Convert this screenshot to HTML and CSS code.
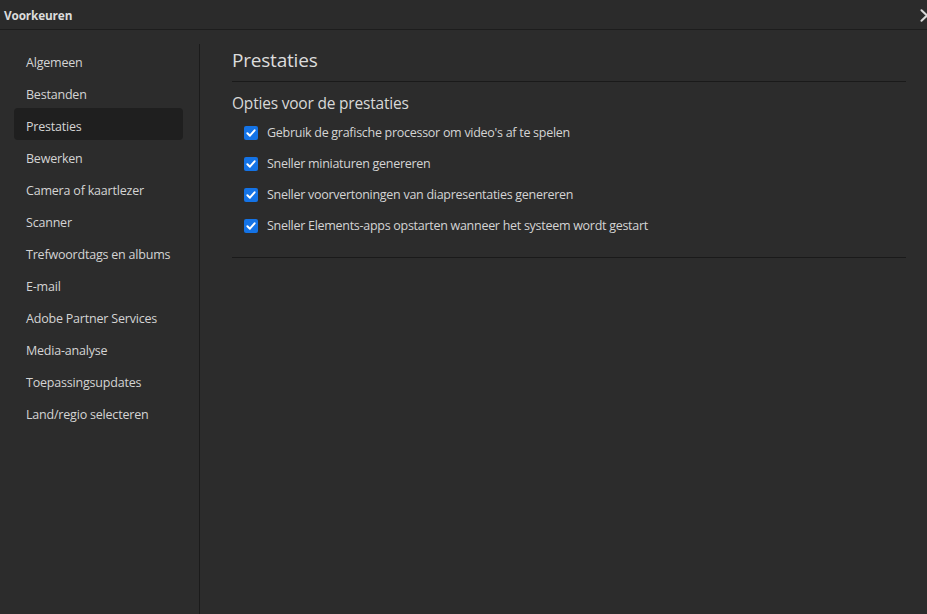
FILE: index.html
```html
<!DOCTYPE html>
<html lang="nl">
<head>
<meta charset="utf-8">
<title>Voorkeuren</title>
<link rel="stylesheet" href="styles.css">
</head>
<body>
<div class="dialog">
  <header class="titlebar">
    <span class="title">Voorkeuren</span>
    <span class="close" aria-label="Sluiten">
      <svg class="close-icon" width="14" height="13" viewBox="0 0 14 13"><path d="M1.5 1.2 L12.5 11.8 M12.5 1.2 L1.5 11.8" stroke="#d8d8d8" stroke-width="2" stroke-linecap="round"/></svg>
    </span>
  </header>
  <div class="body">
    <nav class="sidebar">
      <div class="nav-item">Algemeen</div>
      <div class="nav-item">Bestanden</div>
      <div class="nav-item active">Prestaties</div>
      <div class="nav-item">Bewerken</div>
      <div class="nav-item">Camera of kaartlezer</div>
      <div class="nav-item">Scanner</div>
      <div class="nav-item">Trefwoordtags en albums</div>
      <div class="nav-item">E-mail</div>
      <div class="nav-item">Adobe Partner Services</div>
      <div class="nav-item">Media-analyse</div>
      <div class="nav-item">Toepassingsupdates</div>
      <div class="nav-item">Land/regio selecteren</div>
    </nav>
    <main class="content">
      <h1 class="page-title">Prestaties</h1>
      <section class="group">
        <h2 class="group-title">Opties voor de prestaties</h2>
        <ul class="options">
          <li class="option"><span class="check"><svg viewBox="0 0 14 14" width="14" height="14"><path d="M3.4 7.2 L5.9 9.7 L10.6 4.3" fill="none" stroke="#fff" stroke-width="2" stroke-linecap="round" stroke-linejoin="round"/></svg></span>Gebruik de grafische processor om video's af te spelen</li>
          <li class="option"><span class="check"><svg viewBox="0 0 14 14" width="14" height="14"><path d="M3.4 7.2 L5.9 9.7 L10.6 4.3" fill="none" stroke="#fff" stroke-width="2" stroke-linecap="round" stroke-linejoin="round"/></svg></span>Sneller miniaturen genereren</li>
          <li class="option"><span class="check"><svg viewBox="0 0 14 14" width="14" height="14"><path d="M3.4 7.2 L5.9 9.7 L10.6 4.3" fill="none" stroke="#fff" stroke-width="2" stroke-linecap="round" stroke-linejoin="round"/></svg></span>Sneller voorvertoningen van diapresentaties genereren</li>
          <li class="option"><span class="check"><svg viewBox="0 0 14 14" width="14" height="14"><path d="M3.4 7.2 L5.9 9.7 L10.6 4.3" fill="none" stroke="#fff" stroke-width="2" stroke-linecap="round" stroke-linejoin="round"/></svg></span>Sneller Elements-apps opstarten wanneer het systeem wordt gestart</li>
        </ul>
      </section>
    </main>
  </div>
</div>
</body>
</html>
```
FILE: styles.css
```css
* { box-sizing: border-box; }
html, body { margin: 0; padding: 0; height: 100%; }
body {
  background: #2c2c2c;
  color: #d4d4d4;
  font-family: "Open Sans", "Noto Sans", sans-serif;
  overflow: hidden;
}
.dialog { display: flex; flex-direction: column; height: 614px; width: 927px; overflow: hidden; }
.titlebar {
  height: 30px;
  flex: none;
  display: flex;
  justify-content: space-between;
  padding: 0 0 0 4px;
  border-bottom: 1px solid #1d1d1d;
  background: #2b2b2b;
}
.title { font-size: 11.8px; line-height: 31px; font-weight: 700; color: #dcdcdc; letter-spacing: -0.15px; }
.close { width: 7px; overflow: hidden; display: flex; margin-top: 9px; height: 13px; flex: none; }
.close-icon { flex: none; width: 14px; height: 13px; }
.body { flex: 1; display: flex; }
.sidebar {
  width: 200px;
  flex: none;
  border-right: 1px solid #1b1b1b;
  padding: 0 16px 0 14px;
  margin-top: 14px;
  display: flex;
  flex-direction: column;
}
.nav-item {
  height: 32px;
  padding-top: 3px;
  line-height: 31px;
  padding-left: 12px;
  font-size: 12.5px;
  color: #d4d4d4;
  border-radius: 4px;
  letter-spacing: -0.2px;
}
.nav-item.active { background: #1f1f1f; }
.content { flex: 1; padding: 14px 21px 0 32px; }
.page-title {
  margin: 0;
  font-size: 19px;
  font-weight: 400;
  color: #dcdcdc;
  height: 38px;
  line-height: 33px;
  border-bottom: 1px solid #1a1a1a;
  letter-spacing: -0.2px;
}
.group { border-bottom: 1px solid #1a1a1a; padding-bottom: 16px; }
.group-title {
  margin: 0;
  font-size: 15.5px;
  font-weight: 400;
  color: #d8d8d8;
  line-height: 20px;
  margin-top: 11px;
  letter-spacing: -0.2px;
}
.options { list-style: none; margin: 4px 0 0; padding: 0 0 0 12px; }
.option {
  display: flex;
  align-items: center;
  height: 31px;
  font-size: 12.5px;
  color: #d4d4d4;
  letter-spacing: -0.28px;
}
.check {
  width: 14px; height: 14px;
  background: #1473e6;
  border-radius: 2px;
  margin-right: 9px;
  display: flex;
  flex: none;
}
```
